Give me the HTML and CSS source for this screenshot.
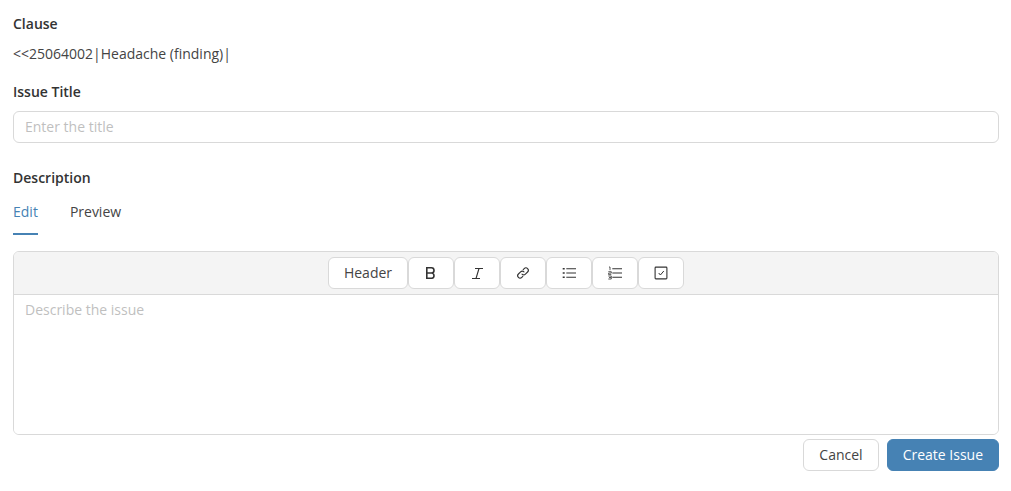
FILE: index.html
```html
<!DOCTYPE html>
<html lang="en">
  <head>
    <meta charset="UTF-8" />
    <title>Create Issue</title>
    <link rel="stylesheet" href="styles.css">
  </head>
  <body>
    <div class="issue-form">
      <div class="field-label clause-label">Clause</div>
      <div class="clause-text">&lt;&lt;25064002|Headache (finding)|</div>

      <label class="field-label title-label" for="issueTitle">Issue Title</label>
      <input type="text" id="issueTitle" class="title-input" placeholder="Enter the title" />

      <div class="field-label description-label">Description</div>
      <div class="tabs">
        <span class="tab tab-active">Edit</span>
        <span class="tab">Preview</span>
      </div>

      <div class="editor">
        <div class="toolbar">
          <button class="tool tool-header">Header</button>
          <button class="tool" aria-label="Bold">
            <svg width="16" height="16" viewBox="0 0 16 16"><path d="M3.8 2.8h4.6a2.6 2.6 0 0 1 0 5.2H3.8zM3.8 8h5a2.7 2.7 0 0 1 0 5.3h-5z" fill="none" stroke="#333" stroke-width="1.6"/></svg>
          </button>
          <button class="tool" aria-label="Italic">
            <svg width="16" height="16" viewBox="0 0 16 16"><path d="M6 3.5h8M10 3.5 7 13.5M3 13.5h8" fill="none" stroke="#333" stroke-width="1.1"/></svg>
          </button>
          <button class="tool" aria-label="Link">
            <svg width="16" height="16" viewBox="0 0 16 16"><g fill="none" stroke="#333" stroke-width="1.1" stroke-linecap="round"><path d="M7 9.2a2.4 2.4 0 0 0 3.4 0l2.2-2.2a2.4 2.4 0 0 0-3.4-3.4l-1 1"/><path d="M9 6.8a2.4 2.4 0 0 0-3.4 0L3.4 9a2.4 2.4 0 0 0 3.4 3.4l1-1"/></g></svg>
          </button>
          <button class="tool" aria-label="Bulleted list">
            <svg width="16" height="16" viewBox="0 0 16 16"><path d="M5.3 3.7H15M5.3 8H15M5.3 12.3H15" stroke="#333" stroke-width="1.1"/><path d="M1.7 3.7h2M1.7 8h2M1.7 12.3h2" stroke="#333" stroke-width="1.4"/></svg>
          </button>
          <button class="tool" aria-label="Numbered list">
            <svg width="16" height="16" viewBox="0 0 16 16"><path d="M5.3 3.7H15M5.3 8H15M5.3 12.3H15" stroke="#333" stroke-width="1.1"/><path d="M2 2h1v3.2M1.3 6.7h3v1.4H1.6v1.5h2.7M1.3 11h3v3h-3M2 12.5h2" fill="none" stroke="#333" stroke-width=".8"/></svg>
          </button>
          <button class="tool" aria-label="Task list">
            <svg width="16" height="16" viewBox="0 0 16 16"><rect x="2.1" y="2.1" width="11.8" height="11.8" rx=".8" fill="none" stroke="#333" stroke-width="1.1"/><path d="M5.7 8l1.7 2L10.8 6" fill="none" stroke="#333" stroke-width="1"/></svg>
          </button>
        </div>
        <textarea class="editor-body" placeholder="Describe the issue"></textarea>
      </div>

      <div class="actions">
        <button class="btn btn-cancel">Cancel</button>
        <button class="btn btn-primary">Create Issue</button>
      </div>
    </div>
  </body>
</html>
```

FILE: styles.css
```css
body {
  margin: 0;
  font-family: "Open Sans", sans-serif;
  font-size: 14px;
  color: #444;
  background-color: #fff;
}
.issue-form {
  display: flex;
  flex-direction: column;
  padding: 14px 12px 0 13px;
}
.field-label {
  display: block;
  font-weight: 600;
  line-height: 20px;
  color: #333;
}
.clause-text {
  line-height: 20px;
  margin-top: 10px;
}
.title-label {
  margin-top: 18px;
}
.title-input {
  box-sizing: border-box;
  height: 32px;
  margin-top: 9px;
  padding: 0 11px 2px;
  border: 1px solid #d9d9d9;
  border-radius: 6px;
  font-family: inherit;
  font-size: 14px;
  outline: none;
}
.title-input::placeholder,
.editor-body::placeholder {
  color: #bfbfbf;
  opacity: 1;
}
.description-label {
  margin-top: 25px;
}
.tabs {
  display: flex;
  gap: 32px;
  margin-top: 14px;
}
.tab {
  padding-bottom: 11px;
  line-height: 20px;
  color: #444;
}
.tab-active {
  color: #4682b4;
  border-bottom: 2px solid #4682b4;
}
.editor {
  display: flex;
  flex-direction: column;
  height: 184px;
  box-sizing: border-box;
  margin-top: 16px;
  border: 1px solid #d9d9d9;
  border-radius: 6px;
  overflow: hidden;
}
.toolbar {
  display: flex;
  justify-content: center;
  height: 43px;
  box-sizing: border-box;
  padding-top: 5px;
  background-color: #f4f4f4;
  border-bottom: 1px solid #d9d9d9;
}
.tool {
  display: flex;
  align-items: center;
  justify-content: center;
  box-sizing: border-box;
  width: 46px;
  height: 32px;
  padding: 0;
  background-color: #fff;
  border: 1px solid #d9d9d9;
  border-radius: 6px;
  font-family: inherit;
  font-size: 14px;
  color: #444;
}
.tool-header {
  width: 80px;
  padding-bottom: 2px;
}
.editor-body {
  flex: 1;
  padding: 5px 11px;
  border: 0;
  outline: none;
  resize: none;
  font-family: inherit;
  font-size: 14px;
  line-height: 20px;
}
.actions {
  display: flex;
  justify-content: flex-end;
  gap: 8px;
  margin-top: 4px;
}
.btn {
  box-sizing: border-box;
  height: 32px;
  padding: 0 15px 2px;
  border: 1px solid #d9d9d9;
  border-radius: 6px;
  font-family: inherit;
  font-size: 14px;
  color: #444;
  background-color: #fff;
}
.btn-primary {
  color: #fff;
  background-color: #4682b4;
  border-color: #4682b4;
}
```
